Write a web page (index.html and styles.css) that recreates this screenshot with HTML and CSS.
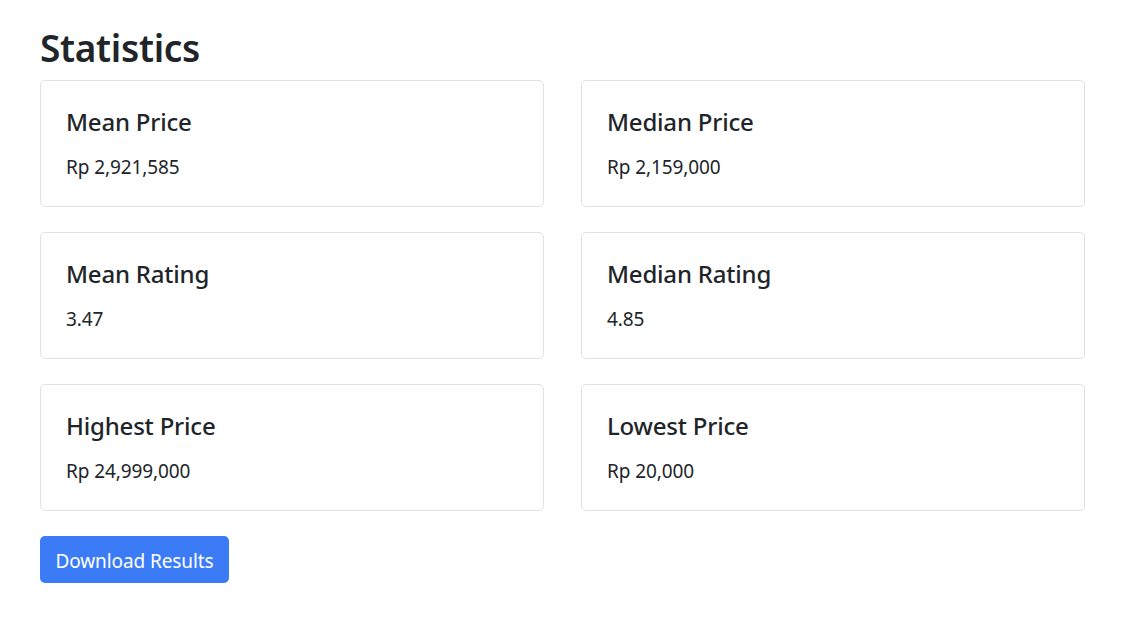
FILE: index.html
```html
<!DOCTYPE html>
<html lang="en">
<head>
<meta charset="utf-8">
<title>Statistics</title>
<link rel="stylesheet" href="styles.css">
</head>
<body>
<main class="page">
  <h1 class="page-title">Statistics</h1>
  <div class="stats-grid">
    <section class="stat-card"><h4 class="stat-title">Mean Price</h4><p class="stat-value">Rp 2,921,585</p></section>
    <section class="stat-card"><h4 class="stat-title">Median Price</h4><p class="stat-value">Rp 2,159,000</p></section>
    <section class="stat-card"><h4 class="stat-title">Mean Rating</h4><p class="stat-value">3.47</p></section>
    <section class="stat-card"><h4 class="stat-title">Median Rating</h4><p class="stat-value">4.85</p></section>
    <section class="stat-card"><h4 class="stat-title">Highest Price</h4><p class="stat-value">Rp 24,999,000</p></section>
    <section class="stat-card"><h4 class="stat-title">Lowest Price</h4><p class="stat-value">Rp 20,000</p></section>
  </div>
  <button class="btn-download" type="button">Download Results</button>
</main>
</body>
</html>
```
FILE: styles.css
```css
* { box-sizing: border-box; }
html, body {
  margin: 0;
  background: #ffffff;
}
body {
  font-family: "Noto Sans", "Open Sans", sans-serif;
  color: #212529;
}
.page {
  padding: 23px 40px 37px 40px;
  display: flex;
  flex-direction: column;
  align-items: flex-start;
}
.page-title {
  margin: 0 0 7px 0;
  font-size: 37px;
  font-weight: 600;
  line-height: 50px;
  letter-spacing: -0.3px;
}
.stats-grid {
  width: 100%;
  display: grid;
  grid-template-columns: 504px 504px;
  column-gap: 37px;
  row-gap: 25px;
}
.stat-card {
  border: 1px solid #dfe1e4;
  border-radius: 5px;
  padding: 25px 25px 23px 25px;
  height: 127px;
}
.stat-title {
  margin: 0 0 16px 0;
  font-size: 24px;
  font-weight: 500;
  line-height: 32px;
  letter-spacing: -0.2px;
}
.stat-value {
  margin: 0;
  font-size: 19px;
  line-height: 27px;
  letter-spacing: -0.1px;
}
.btn-download {
  margin-top: 25px;
  width: 189px;
  height: 47px;
  border: none;
  border-radius: 5px;
  background: #3b7cf6;
  color: #ffffff;
  font-family: "Noto Sans", "Open Sans", sans-serif;
  font-size: 19px;
  letter-spacing: -0.1px;
  padding: 2px 0 0 0;
}
```
